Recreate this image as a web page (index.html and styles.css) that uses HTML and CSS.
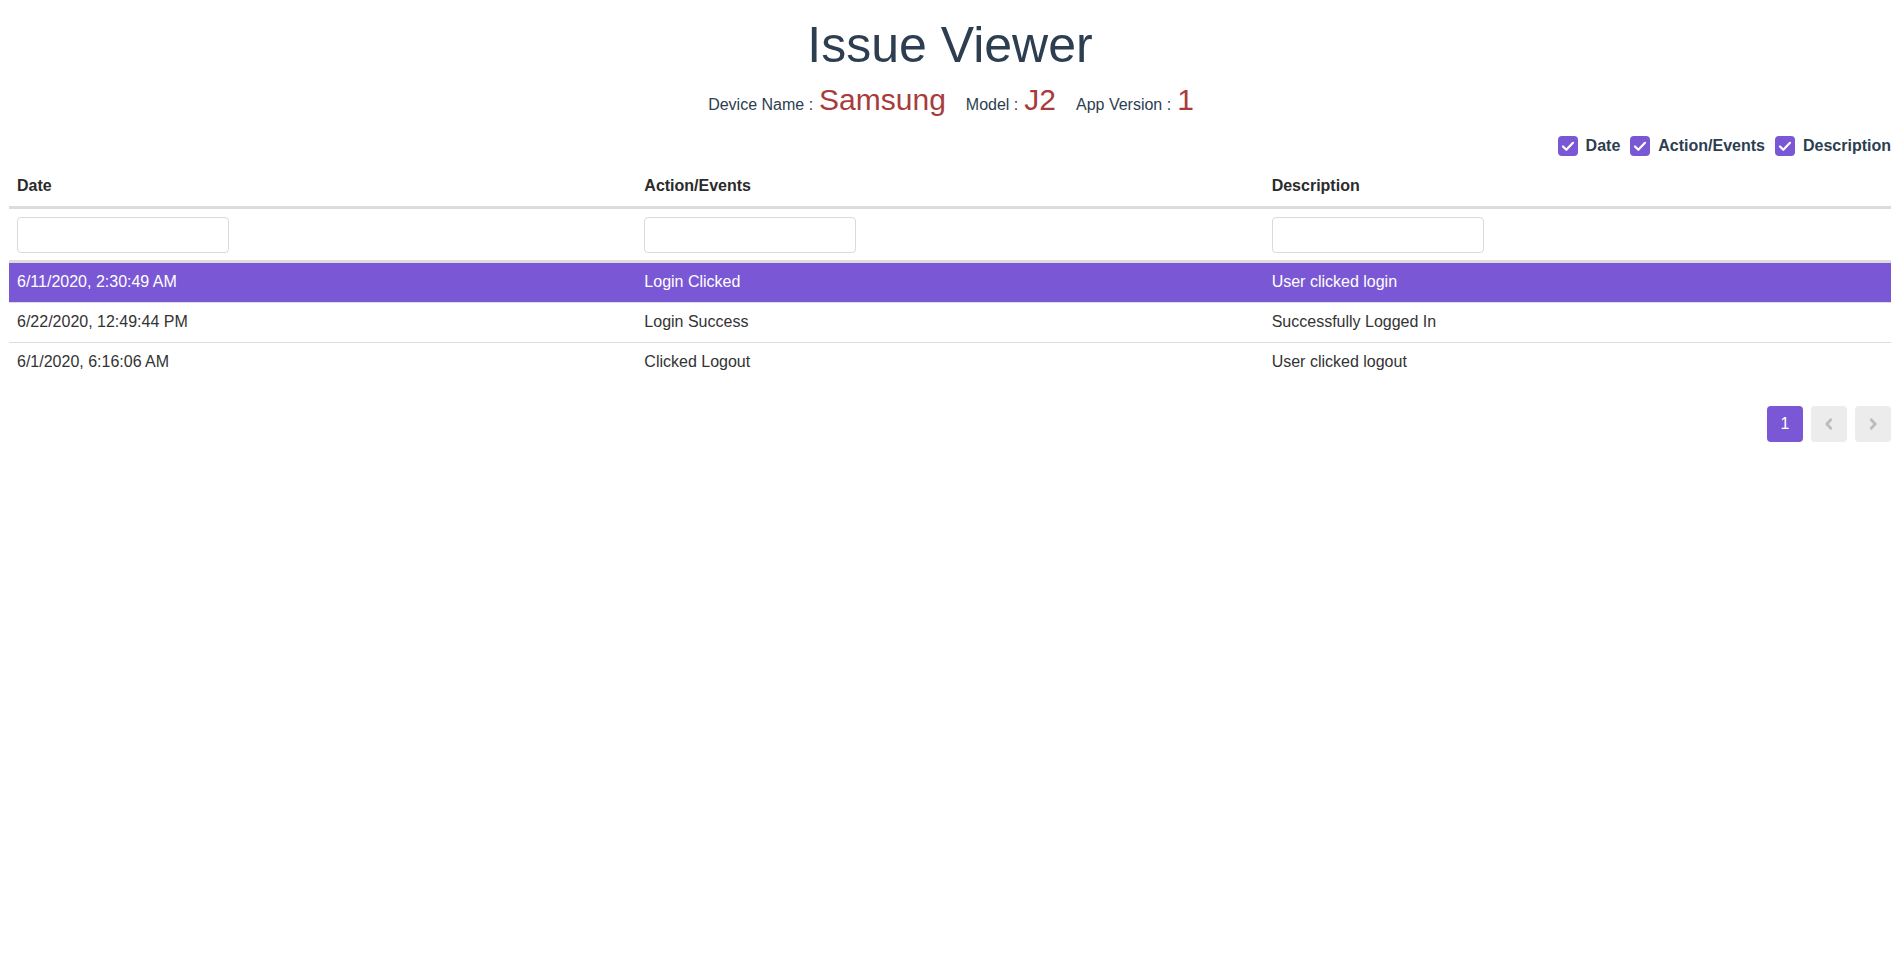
FILE: index.html
```html
<!DOCTYPE html>
<html lang="en">
<head>
<meta charset="utf-8">
<title>Issue Viewer</title>
<link rel="stylesheet" href="styles.css">
</head>
<body>
<div class="app">
  <header class="head">
    <h1 class="title">Issue Viewer</h1>
    <div class="info">
      <span class="group"><span class="label">Device Name :</span><span class="value">Samsung</span></span>
      <span class="group"><span class="label">Model :</span><span class="value">J2</span></span>
      <span class="group"><span class="label">App Version :</span><span class="value">1</span></span>
    </div>
  </header>

  <div class="toggles">
    <label class="toggle"><span class="box"><svg viewBox="0 0 20 20" width="20" height="20"><path d="M5 10.5l3.3 3.3L15 6.8" fill="none" stroke="#fff" stroke-width="2.2" stroke-linecap="round" stroke-linejoin="round"/></svg></span>Date</label>
    <label class="toggle"><span class="box"><svg viewBox="0 0 20 20" width="20" height="20"><path d="M5 10.5l3.3 3.3L15 6.8" fill="none" stroke="#fff" stroke-width="2.2" stroke-linecap="round" stroke-linejoin="round"/></svg></span>Action/Events</label>
    <label class="toggle"><span class="box"><svg viewBox="0 0 20 20" width="20" height="20"><path d="M5 10.5l3.3 3.3L15 6.8" fill="none" stroke="#fff" stroke-width="2.2" stroke-linecap="round" stroke-linejoin="round"/></svg></span>Description</label>
  </div>

  <table class="grid">
    <thead>
      <tr>
        <th>Date</th>
        <th>Action/Events</th>
        <th>Description</th>
      </tr>
      <tr class="filters">
        <td><input class="filter" type="text"></td>
        <td><input class="filter" type="text"></td>
        <td><input class="filter" type="text"></td>
      </tr>
    </thead>
    <tbody>
      <tr class="selected">
        <td>6/11/2020, 2:30:49 AM</td>
        <td>Login Clicked</td>
        <td>User clicked login</td>
      </tr>
      <tr>
        <td>6/22/2020, 12:49:44 PM</td>
        <td>Login Success</td>
        <td>Successfully Logged In</td>
      </tr>
      <tr>
        <td>6/1/2020, 6:16:06 AM</td>
        <td>Clicked Logout</td>
        <td>User clicked logout</td>
      </tr>
    </tbody>
  </table>

  <nav class="pager">
    <button class="page active">1</button>
    <button class="page nav"><svg viewBox="0 0 14 14" width="14" height="14"><path d="M8.8 2.8L4.8 7l4 4.2" fill="none" stroke="#bcbcbc" stroke-width="2.8" stroke-linecap="round" stroke-linejoin="round"/></svg></button>
    <button class="page nav"><svg viewBox="0 0 14 14" width="14" height="14"><path d="M5.2 2.8l4 4.2-4 4.2" fill="none" stroke="#bcbcbc" stroke-width="2.8" stroke-linecap="round" stroke-linejoin="round"/></svg></button>
  </nav>
</div>
</body>
</html>
```

FILE: styles.css
```css
* { box-sizing: border-box; }

body {
  margin: 0;
  font-family: "Liberation Sans", Arial, Helvetica, sans-serif;
  color: #2c3e50;
  background: #fff;
}

.app {
  padding: 0 10px 0 9px;
}

.head {
  text-align: center;
}

.title {
  margin: 15px 0 0;
  font-size: 50px;
  line-height: 60px;
  font-weight: 400;
  color: #2c3e50;
}

.info {
  display: flex;
  justify-content: center;
  align-items: baseline;
  gap: 20px;
  margin-top: 8px;
  padding-left: 2px;
}

.group {
  display: flex;
  align-items: baseline;
  gap: 6px;
}

.label {
  font-size: 16px;
  line-height: 20px;
  color: #2c3e50;
}

.value {
  font-size: 30px;
  line-height: 34px;
  color: #a83c3c;
}

.toggles {
  display: flex;
  justify-content: flex-end;
  align-items: center;
  gap: 10px;
  margin-top: 19px;
  height: 20px;
}

.toggle {
  display: flex;
  align-items: center;
  gap: 8px;
  font-size: 16px;
  font-weight: 700;
  color: #2c3e50;
}

.box {
  display: block;
  width: 20px;
  height: 20px;
  border-radius: 4px;
  background: #7a57d4;
}

.box svg { display: block; }

.grid {
  width: 100%;
  margin-top: 2px;
  border-collapse: collapse;
  table-layout: fixed;
  font-size: 16px;
  color: #333;
}

.grid th {
  text-align: left;
  font-weight: 700;
  padding: 16px 8px 8px;
  line-height: 24px;
  border-bottom: 3px solid #dcdcdc;
  color: #2b2b2b;
}

.filters td {
  padding: 8px 8px 7px;
  border-bottom: 3px solid #dcdcdc;
}

.filter {
  display: block;
  width: 212px;
  height: 36px;
  border: 1px solid #dadada;
  border-radius: 4px;
  background: #fff;
  font: inherit;
  padding: 0 8px;
}

.grid tbody td {
  padding: 7px 8px 8px;
  line-height: 24px;
}

.grid tbody tr + tr td {
  border-top: 1px solid #dcdcdc;
}

.grid tbody tr.selected td {
  background: #7a57d4;
  color: #fff;
}

.pager {
  display: flex;
  justify-content: flex-end;
  gap: 8px;
  margin-top: 24px;
}

.page {
  width: 36px;
  height: 36px;
  border: 0;
  border-radius: 4px;
  font-family: inherit;
  font-size: 16px;
  display: flex;
  align-items: center;
  justify-content: center;
  padding: 0;
}

.page.active {
  background: #7a57d4;
  color: #fff;
}

.page.nav {
  background: #ececec;
}

.page svg { display: block; }
```
